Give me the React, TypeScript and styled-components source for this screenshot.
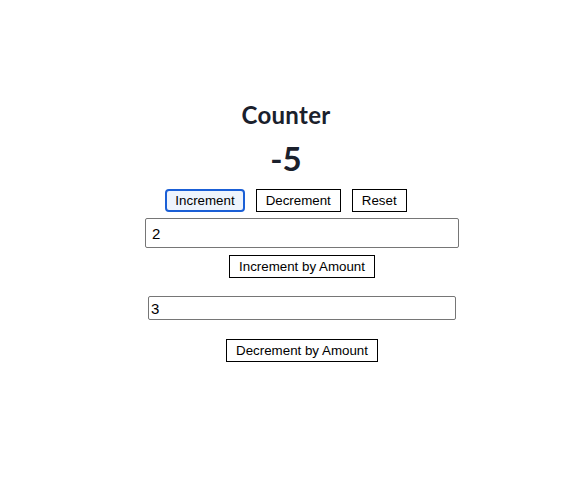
import React, { useState } from "react";
import styled, { createGlobalStyle } from "styled-components";

const Global = createGlobalStyle`
  html, body { margin: 0; padding: 0; background: #ffffff; }
  body { font-family: "Liberation Sans", Arial, sans-serif; }
`;

const Page = styled.div`
  width: 588px;
  display: flex;
  flex-direction: column;
  align-items: center;
`;

const Upper = styled.section`
  display: flex;
  flex-direction: column;
  align-items: center;
  padding-right: 16px;
`;

const Lower = styled.section`
  display: flex;
  flex-direction: column;
  align-items: center;
  padding-left: 16px;
`;

const Title = styled.h1`
  margin: 100px 0 0;
  font-family: Lato, "Noto Sans", sans-serif;
  font-weight: 700;
  font-size: 24px;
  line-height: 29px;
  letter-spacing: 0.3px;
  color: #1a202c;
`;

const Value = styled.div`
  margin-top: 10px;
  font-family: Lato, "Noto Sans", sans-serif;
  font-weight: 700;
  font-size: 33px;
  line-height: 38px;
  color: #1a202c;
`;

const ButtonRow = styled.div`
  margin-top: 12px;
  display: flex;
  gap: 11px;
`;

const Button = styled.button<{ $focused?: boolean; $top?: number }>`
  box-sizing: border-box;
  height: 23px;
  margin-top: ${(p) => p.$top ?? 0}px;
  padding: 0 ${(p) => (p.$focused ? 8 : 9)}px;
  font-family: "Liberation Sans", Arial, sans-serif;
  font-size: 13.33px;
  color: #000;
  background: ${(p) => (p.$focused ? "#eef4fd" : "#ffffff")};
  border: ${(p) => (p.$focused ? "2px solid #1a5fd6" : "1px solid #000")};
  border-radius: ${(p) => (p.$focused ? "4px" : "0")};
  cursor: pointer;
  outline: none;
`;

const Field = styled.input<{ $w: number; $h: number; $pad: number; $top: number }>`
  box-sizing: border-box;
  width: ${(p) => p.$w}px;
  height: ${(p) => p.$h}px;
  margin-top: ${(p) => p.$top}px;
  padding: 0 ${(p) => p.$pad}px;
  font-family: "Liberation Sans", Arial, sans-serif;
  font-size: 15px;
  color: #000;
  border: 1px solid #767676;
  border-radius: 2px;
  outline: none;
`;

export default function App() {
  const [count, setCount] = useState(-5);
  const [incAmt, setIncAmt] = useState("2");
  const [decAmt, setDecAmt] = useState("3");
  return (
    <>
      <Global />
      <Page>
        <Upper>
          <Title>Counter</Title>
          <Value>{count}</Value>
          <ButtonRow>
            <Button $focused onClick={() => setCount(count + 1)}>Increment</Button>
            <Button onClick={() => setCount(count - 1)}>Decrement</Button>
            <Button onClick={() => setCount(0)}>Reset</Button>
          </ButtonRow>
        </Upper>
        <Lower>
          <Field $w={314} $h={30} $pad={6} $top={6} value={incAmt} onChange={(e) => setIncAmt(e.target.value)} />
          <Button $top={7} onClick={() => setCount(count + (Number(incAmt) || 0))}>Increment by Amount</Button>
          <Field $w={308} $h={24} $pad={2} $top={18} value={decAmt} onChange={(e) => setDecAmt(e.target.value)} />
          <Button $top={19} onClick={() => setCount(count - (Number(decAmt) || 0))}>Decrement by Amount</Button>
        </Lower>
      </Page>
    </>
  );
}
